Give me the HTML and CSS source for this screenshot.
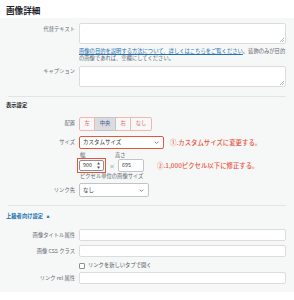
FILE: index.html
```html
<!DOCTYPE html>
<html>
<head>
	<meta charset="utf-8" />
	<title>画像詳細</title>
	<link rel="stylesheet" href="styles.css">
</head>
<body>
	<div class="title">画像詳細</div>
	<div class="panel">
		<div class="row alt">
			<div class="lbl">代替テキスト</div>
			<div class="field">
				<div class="area"><span class="grip"></span></div>
				<p class="help"><a href="#">画像の目的を説明する方法について、詳しくはこちらをご覧ください</a>。装飾のみが目的<br>の画像であれば、空欄にしてください。</p>
			</div>
		</div>
		<div class="row cap">
			<div class="lbl">キャプション</div>
			<div class="field"><div class="area"><span class="grip"></span></div></div>
		</div>
		<hr class="sep sep1">
		<h3 class="sect">表示設定</h3>
		<div class="row mid align">
			<div class="lbl">配置</div>
			<div class="field">
				<div class="group">
					<span class="btn">左</span><span class="btn on">中央</span><span class="btn">右</span><span class="btn">なし</span>
				</div>
			</div>
		</div>
		<div class="row mid size">
			<div class="lbl">サイズ</div>
			<div class="field line">
				<div class="select red">カスタムサイズ<svg viewBox="0 0 8 5"><path d="M1 1l3 3 3-3" /></svg></div>
				<span class="note note1">①.カスタムサイズに変更する。</span>
			</div>
		</div>
		<div class="row dims">
			<div class="lbl"></div>
			<div class="field">
				<div class="dimhead"><span class="w">幅</span><span>高さ</span></div>
				<div class="line">
					<div class="redbox"><div class="num">900<span class="spin"><i>▲</i><i>▼</i></span></div></div>
					<span class="x">×</span>
					<div class="num h">695</div>
					<span class="note note2">②.1,000ピクセル以下に修正する。</span>
				</div>
				<p class="hint">ピクセル単位の画像サイズ</p>
			</div>
		</div>
		<div class="row mid link">
			<div class="lbl">リンク先</div>
			<div class="field"><div class="select short">なし<svg viewBox="0 0 8 5"><path d="M1 1l3 3 3-3" /></svg></div></div>
		</div>
		<hr class="sep sep2">
		<div class="adv">上級者向け設定 <span class="tri">▲</span></div>
		<div class="row mid t1">
			<div class="lbl">画像タイトル属性</div>
			<div class="field"><div class="input"></div></div>
		</div>
		<div class="row mid t2">
			<div class="lbl">画像 CSS クラス</div>
			<div class="field"><div class="input"></div></div>
		</div>
		<div class="row mid t3">
			<div class="lbl"></div>
			<div class="field line"><span class="check"></span><span class="checktext">リンクを新しいタブで開く</span></div>
		</div>
		<div class="row mid t4">
			<div class="lbl">リンク rel 属性</div>
			<div class="field"><div class="input"></div></div>
		</div>
	</div>
</body>
</html>
```

FILE: styles.css
```css
* { margin:0; padding:0; box-sizing:border-box; }
body { background:#fff; font-family:"Noto Sans CJK JP", "Noto Sans", sans-serif; color:#50575e; font-size:5.3px; line-height:7px; }

.title { height:18px; padding:3px 0 0 6px; font-size:8.6px; line-height:14px; font-weight:bold; color:#1d2327; }

.panel { background:#f6f7f7; height:274px; padding:5px 8px 0 0; }

.row { display:grid; grid-template-columns:75px 1fr; column-gap:4px; }
.row.mid { align-items:center; }
.lbl { text-align:right; color:#646970; }
.alt .lbl, .cap .lbl { padding-top:2.5px; }

.area { position:relative; height:21px; background:#fff; border:1px solid #dcdcde; border-radius:2px; }
.grip { position:absolute; right:1px; bottom:1px; width:4px; height:4px; background:linear-gradient(135deg, transparent 45%, #b4b9be 45%, #b4b9be 55%, transparent 55%, transparent 75%, #b4b9be 75%, #b4b9be 85%, transparent 85%); }

.help { margin-top:3.5px; color:#646970; }
.help a { color:#2271b1; text-decoration:underline; }

.cap { margin-top:4px; }

.sep { border:0; border-top:1px solid #e3e4e6; margin-right:0; }
.sep1 { margin-top:9px; margin-left:8px; }
.sep2 { margin-top:8px; margin-left:8px; }

.sect { margin:5px 0 0 6px; font-size:5.3px; line-height:7px; color:#1d2327; }

.align { margin-top:8px; }
.group { display:flex; height:14px; }
.btn { display:flex; align-items:center; padding:0 4.5px; border:1px solid #f0b7b0; border-left:0; color:#e5685a; background:#f6f7f7; }
.btn:first-child { border-left:1px solid #f0b7b0; border-radius:2px 0 0 2px; }
.btn:last-child { border-radius:0 2px 2px 0; }
.btn.on { background:#dcdcde; color:#3d5a99; border-color:#c3c4c7; }

.line { display:flex; align-items:center; }

.size { margin-top:5px; }
.select { position:relative; display:flex; align-items:center; height:13px; padding-left:3px; background:#fff; border:1px solid #8c8f94; border-radius:2px; color:#2c3338; font-size:5.5px; }
.select svg { position:absolute; right:4px; top:4.5px; width:5px; height:3px; fill:none; stroke:#50575e; stroke-width:1.2; }
.select.red { width:85px; border:1.5px solid #e4573d; }
.select.short { width:70px; height:14px; border-color:#c3c4c7; }

.note { color:#e8553f; font-size:6.4px; font-weight:500; white-space:nowrap; }
.note1 { margin-left:6px; }
.note2 { margin-left:13px; }

.dims { margin-top:3.5px; }
.dimhead { display:flex; height:6px; line-height:6px; padding-left:1px; }
.dimhead .w { width:35px; }
.redbox { margin-left:-2px; padding:1px; border:1.5px solid #e4573d; }
.num { position:relative; display:flex; align-items:center; width:25px; height:11px; padding-left:3px; background:#fff; border:1px solid #8c8f94; border-radius:2px; color:#2c3338; }
.num.h { width:26px; height:13px; border-color:#c3c4c7; }
.spin { position:absolute; right:3px; top:1px; display:flex; flex-direction:column; font-size:3px; line-height:4px; font-style:normal; color:#50575e; }
.spin i { font-style:normal; }
.x { margin:0 3.5px; font-size:5px; }
.hint { margin-top:0; line-height:6px; padding-left:1px; color:#646970; }

.link { margin-top:4px; }

.adv { margin:7px 0 0 6px; color:#2271b1; font-weight:bold; line-height:7px; }
.adv .tri { font-size:3.5px; margin-left:2px; }

.input { height:12px; background:#fff; border:1px solid #dcdcde; border-radius:2px; }
.t1 { margin-top:9px; }
.t2 { margin-top:4px; }
.t3 { margin-top:3px; height:11px; }
.check { width:6px; height:6px; margin-left:0; background:#fff; border:1px solid #8c8f94; border-radius:1px; }
.checktext { margin-left:3px; }
.t4 { margin-top:1px; }
```
